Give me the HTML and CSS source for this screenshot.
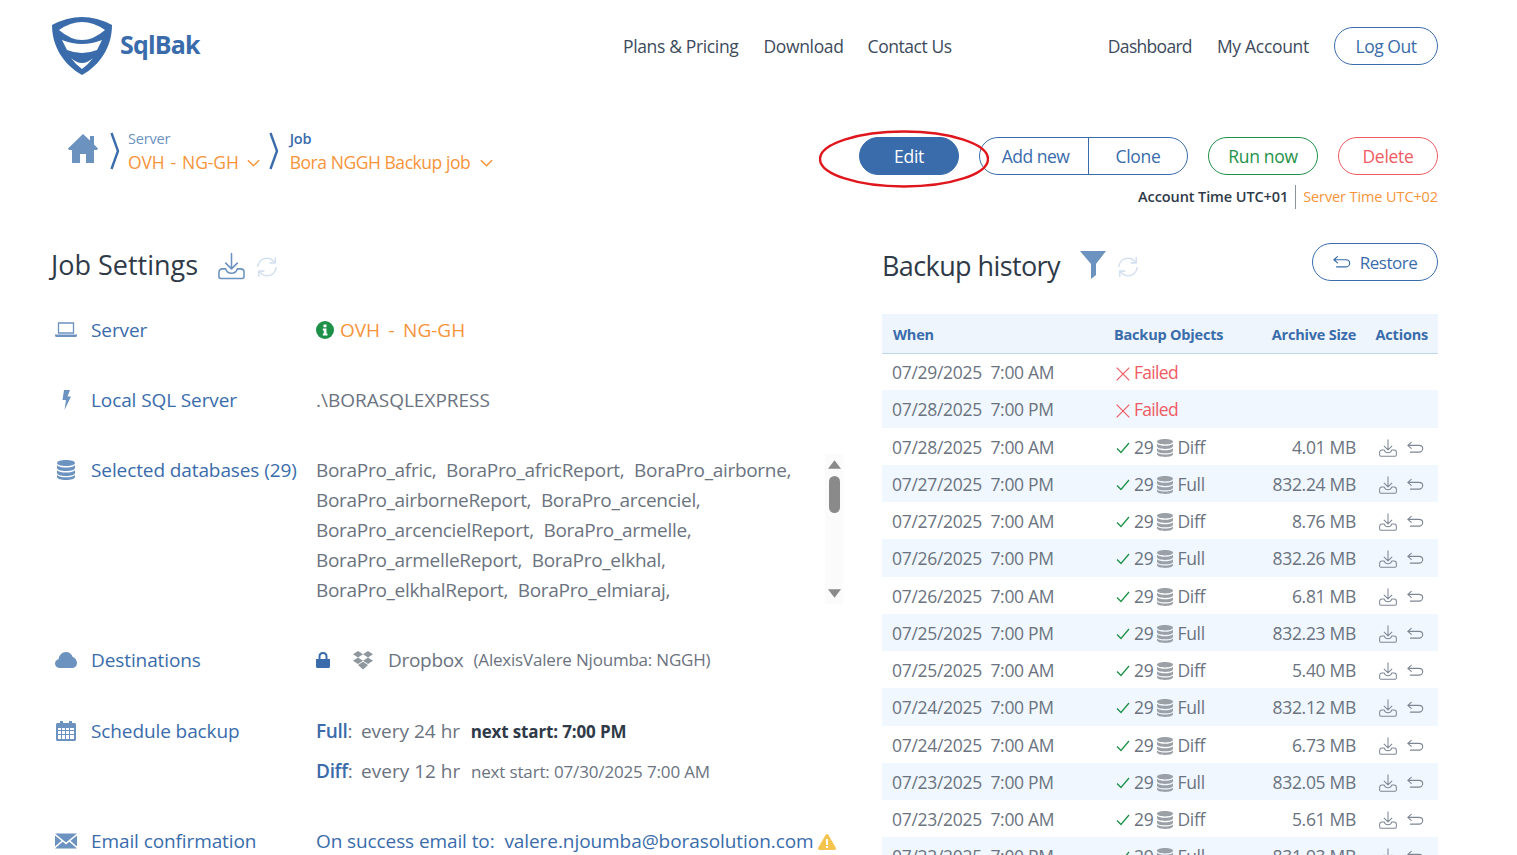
FILE: index.html
```html
<!DOCTYPE html>
<html lang="en">
<head>
<meta charset="utf-8">
<title>SqlBak</title>
<link rel="stylesheet" href="styles.css">
</head>
<body>
<svg class="defs" width="0" height="0" aria-hidden="true">
  <defs>
    <symbol id="i-db" viewBox="0 0 18 20"><path fill="currentColor" d="M9 0c5 0 9 1.300 9 3s-4 3-9 3-9-1.300-9-3 4-3 9-3zM0 5.200C1.500 6.800 5 7.500 9 7.500s7.500-.7 9-2.300V8c0 1.700-4 3-9 3S0 9.700 0 8zM0 10.200c1.500 1.600 5 2.300 9 2.300s7.500-.7 9-2.300V13c0 1.700-4 3-9 3s-9-1.300-9-3zM0 15c1.500 1.600 5 2.300 9 2.300s7.500-.7 9-2.300v2c0 1.700-4 3-9 3s-9-1.300-9-3z"/></symbol>
    <symbol id="i-dl" viewBox="0 0 28 28"><g fill="none" stroke="currentColor" stroke-width="1.600" stroke-linecap="round" stroke-linejoin="round"><path d="M14 1v16M8 11l6 6 6-6"/><path d="M8 17H4.500C2.500 17 1 18.500 1 20.500V25c0 1.200.8 2 2 2h22c1.200 0 2-.8 2-2v-4.500c0-2-1.500-3.500-3.500-3.500H20c-1 3-3 4.500-6 4.500S9 20 8 17z"/></g></symbol>
    <symbol id="i-undo" viewBox="0 0 20 14"><path fill="none" stroke="currentColor" stroke-width="1.300" stroke-linecap="round" stroke-linejoin="round" d="M5 1 1 4.500 5 8M1 4.500h13c2.500 0 4.500 1.500 4.500 3.800S16.500 12.500 14 12.500H4"/></symbol>
    <symbol id="i-refresh" viewBox="0 0 24 24"><g fill="none" stroke="currentColor" stroke-width="1.800" stroke-linecap="round" stroke-linejoin="round"><path d="M2 11C3 6 7 2.500 12 2.500c3.500 0 6 1.500 8 4.500M21 2v5.500h-5.500"/><path d="M22 13c-1 5-5 8.500-10 8.500-3.500 0-6-1.500-8-4.500M3 22v-5.500h5.500"/></g></symbol>
    <symbol id="i-check" viewBox="0 0 14 12"><path fill="none" stroke="currentColor" stroke-width="1.300" d="M1 6.500 5 10.500 13 1"/></symbol>
    <symbol id="i-x" viewBox="0 0 14 14"><path fill="none" stroke="currentColor" stroke-width="1.200" d="M.7.700l12.600 12.600M13.300.7.700 13.300"/></symbol>
  </defs>
</svg>

<div class="page">
  <header class="topbar">
    <a class="brand">
      <svg class="logo" viewBox="0 0 60 58">
        <path fill="#3a6cab" d="M0 8Q30-8 60 8C60 30 48 48 30 58 12 48 0 30 0 8z"/>
        <path fill="#fff" d="M7 13Q30-3 53 13 30 33 7 13z"/>
        <path fill="#fff" d="M10 23Q30 31 50 23L45 33Q30 39 15 33z"/>
        <path fill="#fff" d="M19 41Q30 51 41 41 36 48 30 52 24 48 19 41z"/>
      </svg>
      <span class="brand-name">SqlBak</span>
    </a>
    <nav class="nav-main">
      <a>Plans &amp; Pricing</a>
      <a>Download</a>
      <a class="nav-contact">Contact Us</a>
    </nav>
    <nav class="nav-user">
      <a class="nav-dashboard">Dashboard</a>
      <a class="nav-account">My Account</a>
      <a class="btn btn-blue btn-logout">Log Out</a>
    </nav>
  </header>

  <section class="toolbar">
    <div class="crumbs">
      <svg class="home" viewBox="0 0 30 29"><path fill="#6c92c0" d="M15 0 0 14.500l1 1.500h3v13h8v-9h6v9h8V16h3l1-1.500-4-4V2h-4v4.500z"/></svg>
      <svg class="crumb-sep" viewBox="0 0 10 38"><path fill="none" stroke="#3a6cab" stroke-width="2.400" d="M1.500 1 8 19 1.500 37"/></svg>
      <div class="crumb crumb-server">
        <span class="crumb-label">Server</span>
        <span class="crumb-value crumb-value-server">OVH - NG-GH <svg class="caret" viewBox="0 0 14 8"><path fill="none" stroke="currentColor" stroke-width="1.600" d="M1 1l6 6 6-6"/></svg></span>
      </div>
      <svg class="crumb-sep" viewBox="0 0 10 38"><path fill="none" stroke="#3a6cab" stroke-width="2.400" d="M1.500 1 8 19 1.500 37"/></svg>
      <div class="crumb">
        <span class="crumb-label crumb-label-strong">Job</span>
        <span class="crumb-value crumb-value-job">Bora NGGH Backup job <svg class="caret caret-job" viewBox="0 0 14 8"><path fill="none" stroke="currentColor" stroke-width="1.600" d="M1 1l6 6 6-6"/></svg></span>
      </div>
    </div>
    <div class="actions-wrap">
      <div class="actions">
        <a class="btn btn-solid">Edit</a>
        <div class="btn-group">
          <a class="btn-part btn-part-add">Add new</a>
          <a class="btn-part btn-part-clone">Clone</a>
        </div>
        <a class="btn btn-green">Run now</a>
        <a class="btn btn-red">Delete</a>
        <svg class="annotation" viewBox="0 0 170 58"><ellipse cx="85" cy="29" rx="84" ry="27.500" fill="none" stroke="#e0161d" stroke-width="2.400"/></svg>
      </div>
      <div class="times">
        <span class="time-account">Account Time UTC+01</span>
        <span class="time-server">Server Time UTC+02</span>
      </div>
    </div>
  </section>

  <main class="columns">
    <section class="settings">
      <div class="title-row">
        <h2 class="h-job">Job Settings</h2>
        <svg class="title-dl"><use href="#i-dl"/></svg>
        <svg class="title-refresh"><use href="#i-refresh"/></svg>
      </div>

      <div class="row row-server">
        <svg class="row-icon" viewBox="0 0 22 16"><path fill="none" stroke="currentColor" stroke-width="1.300" d="M3.500 1h15v10h-15z"/><path fill="currentColor" d="M0 12.500h22v1c0 .8-.6 1.500-1.500 1.500h-19C.6 15 0 14.300 0 13.500z"/></svg>
        <span class="row-label">Server</span>
        <div class="row-value value-server">
          <svg class="info" viewBox="0 0 18 18"><circle cx="9" cy="9" r="9" fill="#1e9148"/><path fill="#fff" d="M7.500 3.500h3v2.800h-3zM6.800 7.500h3.700v5h1v2H6.800v-2h1v-3h-1z"/></svg>
          <span>OVH - NG-GH</span>
        </div>
      </div>

      <div class="row row-sql">
        <svg class="row-icon" viewBox="0 0 22 20"><path fill="currentColor" d="M9 0h6l-2.500 6.500H16L9.500 20l1.500-10H7.500z"/></svg>
        <span class="row-label">Local SQL Server</span>
        <div class="row-value value-sql">.\BORASQLEXPRESS</div>
      </div>

      <div class="row row-db">
        <svg class="row-icon"><use href="#i-db"/></svg>
        <span class="row-label">Selected databases (29)</span>
        <div class="db-list">
          <div class="db-text">
            <span>BoraPro_afric,</span> <span>BoraPro_africReport,</span> <span>BoraPro_airborne,</span>
            <span>BoraPro_airborneReport,</span> <span>BoraPro_arcenciel,</span>
            <span>BoraPro_arcencielReport,</span> <span>BoraPro_armelle,</span>
            <span>BoraPro_armelleReport,</span> <span>BoraPro_elkhal,</span>
            <span>BoraPro_elkhalReport,</span> <span>BoraPro_elmiaraj,</span>
          </div>
          <div class="scrollbar">
            <svg class="sb-arrow" viewBox="0 0 12 8"><path fill="#8a8a8a" d="M6 0l6 8H0z"/></svg>
            <div class="sb-thumb"></div>
            <svg class="sb-arrow sb-arrow-end" viewBox="0 0 12 8"><path fill="#8a8a8a" d="M0 0h12L6 8z"/></svg>
          </div>
        </div>
      </div>

      <div class="row row-dest">
        <svg class="row-icon" viewBox="0 0 22 16"><path fill="currentColor" d="M5 16C2 16 0 14 0 11.500 0 9.300 1.500 7.700 3.500 7.300 4 3.500 7 0 11 0c3.300 0 5.800 2 6.700 5C20 5.800 22 8 22 11c0 3-2.500 5-5 5z"/></svg>
        <span class="row-label">Destinations</span>
        <div class="row-value value-dest">
          <svg class="lock" viewBox="0 0 14 16"><path fill="none" stroke="#3a6cab" stroke-width="2" d="M3.500 7V4.500C3.500 2.500 5 1 7 1s3.500 1.500 3.500 3.500V7"/><path fill="#3a6cab" d="M0 7h14v7.500c0 .8-.6 1.500-1.500 1.500h-11C.6 16 0 15.300 0 14.500z"/></svg>
          <svg class="dropbox" viewBox="0 0 20 19"><path fill="#8f979e" d="M5 0l5 3.200L5 6.500 0 3.200zM15 0l5 3.200-5 3.300-5-3.300zM0 9.800l5-3.300 5 3.300L5 13zM15 6.500l5 3.300-5 3.200-5-3.200zM5 14l5-3.200 5 3.200-5 4.500z"/></svg>
          <span>Dropbox</span>
          <span class="dest-account">(AlexisValere Njoumba: NGGH)</span>
        </div>
      </div>

      <div class="row row-schedule">
        <svg class="row-icon" viewBox="0 0 20 20"><path fill="currentColor" fill-rule="evenodd" d="M1.500 2H4V0h3v2h6V0h3v2h2.500C19.300 2 20 2.700 20 3.500v15c0 .8-.7 1.500-1.500 1.500h-17C.7 20 0 19.300 0 18.500v-15C0 2.700.7 2 1.500 2zM2 7v2h3V7zm4 0v2h3V7zm4 0v2h3V7zm4 0v2h4V7zM2 10v3h3v-3zm4 0v3h3v-3zm4 0v3h3v-3zm4 0v3h4v-3zM2 14v4h3v-4zm4 0v4h3v-4zm4 0v4h3v-4zm4 0v4h4v-4z"/></svg>
        <span class="row-label">Schedule backup</span>
        <div class="schedule">
          <div class="sched-line"><b class="sched-kind">Full</b>: <span class="sched-every">every 24 hr</span> <b class="sched-next-strong">next start: 7:00 PM</b></div>
          <div class="sched-line"><b class="sched-kind">Diff</b>: <span class="sched-every">every 12 hr</span> <span class="sched-next">next start: 07/30/2025 7:00 AM</span></div>
        </div>
      </div>

      <div class="row row-email">
        <svg class="row-icon" viewBox="0 0 22 15"><path fill="currentColor" d="M0 0h22L11 9zM0 2l6.500 5.300L0 13zM22 2l-6.500 5.300L22 13zM7.700 8.300 11 11l3.300-2.700L22 15H0z"/></svg>
        <span class="row-label">Email confirmation</span>
        <div class="row-value value-email">On success email to: <span class="email-addr">valere.njoumba@borasolution.com</span><svg class="warn" viewBox="0 0 18 16"><path fill="#f4c44e" d="M9 0c.6 0 1 .3 1.300.8l7.500 13c.5 1-.1 2.200-1.300 2.200h-15C.3 16-.3 14.800.2 13.800L7.700.8C8 .3 8.400 0 9 0z"/><path fill="#fff" d="M8 5h2v6H8zM8 12h2v2H8z"/></svg></div>
      </div>
    </section>

    <section class="history">
      <div class="title-row history-title">
        <h2 class="h-history">Backup history</h2>
        <svg class="filter" viewBox="0 0 26 28"><path fill="#6c92c0" d="M0 0h26L16 13v11l-5 4V13z"/></svg>
        <svg class="title-refresh"><use href="#i-refresh"/></svg>
        <a class="btn btn-blue btn-restore"><svg class="restore-icon"><use href="#i-undo"/></svg>Restore</a>
      </div>

      <table class="runs">
        <thead>
          <tr><th class="c-when">When</th><th class="c-obj">Backup Objects</th><th class="c-size">Archive Size</th><th class="c-act">Actions</th></tr>
        </thead>
        <tbody>
          <tr><td>07/29/2025&nbsp; 7:00 AM</td><td class="failed"><svg class="x"><use href="#i-x"/></svg>Failed</td><td></td><td></td></tr>
          <tr><td>07/28/2025&nbsp; 7:00 PM</td><td class="failed"><svg class="x"><use href="#i-x"/></svg>Failed</td><td></td><td></td></tr>
          <tr><td>07/28/2025&nbsp; 7:00 AM</td><td class="obj"><svg class="ok"><use href="#i-check"/></svg>29<svg class="db"><use href="#i-db"/></svg>Diff</td><td class="size">4.01 MB</td><td class="acts"><svg class="a-dl"><use href="#i-dl"/></svg><svg class="a-undo"><use href="#i-undo"/></svg></td></tr>
          <tr><td>07/27/2025&nbsp; 7:00 PM</td><td class="obj"><svg class="ok"><use href="#i-check"/></svg>29<svg class="db"><use href="#i-db"/></svg>Full</td><td class="size">832.24 MB</td><td class="acts"><svg class="a-dl"><use href="#i-dl"/></svg><svg class="a-undo"><use href="#i-undo"/></svg></td></tr>
          <tr><td>07/27/2025&nbsp; 7:00 AM</td><td class="obj"><svg class="ok"><use href="#i-check"/></svg>29<svg class="db"><use href="#i-db"/></svg>Diff</td><td class="size">8.76 MB</td><td class="acts"><svg class="a-dl"><use href="#i-dl"/></svg><svg class="a-undo"><use href="#i-undo"/></svg></td></tr>
          <tr><td>07/26/2025&nbsp; 7:00 PM</td><td class="obj"><svg class="ok"><use href="#i-check"/></svg>29<svg class="db"><use href="#i-db"/></svg>Full</td><td class="size">832.26 MB</td><td class="acts"><svg class="a-dl"><use href="#i-dl"/></svg><svg class="a-undo"><use href="#i-undo"/></svg></td></tr>
          <tr><td>07/26/2025&nbsp; 7:00 AM</td><td class="obj"><svg class="ok"><use href="#i-check"/></svg>29<svg class="db"><use href="#i-db"/></svg>Diff</td><td class="size">6.81 MB</td><td class="acts"><svg class="a-dl"><use href="#i-dl"/></svg><svg class="a-undo"><use href="#i-undo"/></svg></td></tr>
          <tr><td>07/25/2025&nbsp; 7:00 PM</td><td class="obj"><svg class="ok"><use href="#i-check"/></svg>29<svg class="db"><use href="#i-db"/></svg>Full</td><td class="size">832.23 MB</td><td class="acts"><svg class="a-dl"><use href="#i-dl"/></svg><svg class="a-undo"><use href="#i-undo"/></svg></td></tr>
          <tr><td>07/25/2025&nbsp; 7:00 AM</td><td class="obj"><svg class="ok"><use href="#i-check"/></svg>29<svg class="db"><use href="#i-db"/></svg>Diff</td><td class="size">5.40 MB</td><td class="acts"><svg class="a-dl"><use href="#i-dl"/></svg><svg class="a-undo"><use href="#i-undo"/></svg></td></tr>
          <tr><td>07/24/2025&nbsp; 7:00 PM</td><td class="obj"><svg class="ok"><use href="#i-check"/></svg>29<svg class="db"><use href="#i-db"/></svg>Full</td><td class="size">832.12 MB</td><td class="acts"><svg class="a-dl"><use href="#i-dl"/></svg><svg class="a-undo"><use href="#i-undo"/></svg></td></tr>
          <tr><td>07/24/2025&nbsp; 7:00 AM</td><td class="obj"><svg class="ok"><use href="#i-check"/></svg>29<svg class="db"><use href="#i-db"/></svg>Diff</td><td class="size">6.73 MB</td><td class="acts"><svg class="a-dl"><use href="#i-dl"/></svg><svg class="a-undo"><use href="#i-undo"/></svg></td></tr>
          <tr><td>07/23/2025&nbsp; 7:00 PM</td><td class="obj"><svg class="ok"><use href="#i-check"/></svg>29<svg class="db"><use href="#i-db"/></svg>Full</td><td class="size">832.05 MB</td><td class="acts"><svg class="a-dl"><use href="#i-dl"/></svg><svg class="a-undo"><use href="#i-undo"/></svg></td></tr>
          <tr><td>07/23/2025&nbsp; 7:00 AM</td><td class="obj"><svg class="ok"><use href="#i-check"/></svg>29<svg class="db"><use href="#i-db"/></svg>Diff</td><td class="size">5.61 MB</td><td class="acts"><svg class="a-dl"><use href="#i-dl"/></svg><svg class="a-undo"><use href="#i-undo"/></svg></td></tr>
          <tr><td>07/22/2025&nbsp; 7:00 PM</td><td class="obj"><svg class="ok"><use href="#i-check"/></svg>29<svg class="db"><use href="#i-db"/></svg>Full</td><td class="size">831.93 MB</td><td class="acts"><svg class="a-dl"><use href="#i-dl"/></svg><svg class="a-undo"><use href="#i-undo"/></svg></td></tr>
        </tbody>
      </table>
    </section>
  </main>
</div>
</body>
</html>
```

FILE: styles.css
```css
* { box-sizing: border-box; }
html, body { margin: 0; height: 100%; overflow: hidden; background: #fff; }
body { font-family: "Open Sans", "Noto Sans", "Liberation Sans", sans-serif; color: #6b7380; font-stretch: 90%; }
.defs { position: absolute; }
.page { width: 1517px; height: 855px; overflow: hidden; padding: 0 79px 0 51px; }
a { text-decoration: none; color: inherit; }

.topbar { display: flex; align-items: flex-start; height: 130px; padding-top: 17px; font-size: 17.500px; color: #3d4a5c; letter-spacing: -.35px; white-space: nowrap; }
.brand { display: flex; align-items: flex-start; width: 572px; }
.logo { width: 60px; height: 58px; margin-left: 1px; flex: none; }
.brand-name { font-size: 25px; font-weight: 700; color: #3a6cab; margin: 10px 0 0 8px; letter-spacing: -.8px; }
.nav-main { display: flex; gap: 25px; padding-top: 17px; width: 484px; }
.nav-contact { letter-spacing: -.45px; margin-left: -1px; }
.nav-user { display: flex; gap: 25px; align-items: flex-start; flex: 1; justify-content: flex-end; padding-top: 17px; }
.nav-dashboard { letter-spacing: -.7px; }
.nav-account { letter-spacing: -.3px; }
.btn-logout { margin-top: -7px; width: 104px; flex: none; letter-spacing: -.5px; }

.btn { display: flex; align-items: center; justify-content: center; height: 38px; border-radius: 19px; border: 1px solid; font-size: 17.500px; }
.btn-blue { border-color: #3a6cab; color: #3a6cab; }
.btn-solid { background: #3a6cab; border-color: #3a6cab; color: #fff; width: 100px; letter-spacing: -.3px; }
.btn-green { border-color: #1e9148; color: #1e9148; width: 110px; letter-spacing: -.3px; }
.btn-red { border-color: #ef5b63; color: #ef5b63; width: 100px; letter-spacing: -.3px; }

.toolbar { display: flex; justify-content: space-between; height: 115px; }
.crumbs { display: flex; align-items: flex-start; padding: 0 0 0 17px; }
.home { width: 30px; height: 29px; margin: 4px 12px 0 0; }
.crumb-sep { width: 10px; height: 38px; margin-top: 2px; flex: none; }
.crumb { display: flex; flex-direction: column; margin-left: 8px; }
.crumb-server { margin-right: 9px; }
.crumb + .crumb-sep + .crumb { margin-left: 11px; }
.crumb-label { font-size: 14.500px; line-height: 18px; color: #6c92c0; letter-spacing: -.2px; }
.crumb-label-strong { color: #3a6cab; font-weight: 600; }
.crumb-value { font-size: 17.500px; line-height: 28px; color: #f7943a; white-space: nowrap; }
.crumb-value-server { word-spacing: 1.500px; letter-spacing: -.1px; }
.crumb-value-job { letter-spacing: -.45px; }
.caret { width: 13px; height: 8px; margin-left: 2px; vertical-align: 2px; }
.caret-job { margin-left: 6px; }

.actions-wrap { display: flex; flex-direction: column; align-items: flex-end; padding-top: 7px; }
.actions { display: flex; gap: 20px; position: relative; }
.btn-group { display: flex; height: 38px; border: 1px solid #3a6cab; border-radius: 19px; color: #3a6cab; font-size: 17.500px; letter-spacing: -.3px; }
.btn-part { display: flex; align-items: center; justify-content: center; }
.btn-part-add { width: 108px; padding-left: 3px; letter-spacing: -.5px; }
.btn-part-clone { width: 99px; border-left: 1px solid #3a6cab; }
.annotation { position: absolute; left: -40px; top: -7px; width: 170px; height: 58px; pointer-events: none; }
.times { display: flex; margin-top: 10px; font-size: 14.500px; line-height: 24px; letter-spacing: -.1px; }
.time-account { color: #2f3a48; font-weight: 600; padding-right: 7px; border-right: 1px solid #8a929c; }
.time-server { color: #f7943a; padding-left: 7px; }

.columns { display: flex; justify-content: space-between; }
.settings { width: 794px; }
.history { width: 556px; }
.title-row { display: flex; align-items: center; height: 40px; margin-top: 0; }
h2 { margin: 0; font-size: 27px; font-weight: 400; color: #2f3a48; }
.h-job { letter-spacing: 0; padding-bottom: 2px; }
.h-history { letter-spacing: -.6px; }
.title-dl { width: 27px; height: 28px; margin: 2px 0 0 20px; color: #6c92c0; }
.title-refresh { width: 22px; height: 22px; margin: 4px 0 0 11px; color: #d5e1ef; }

.row { display: grid; grid-template-columns: 40px 225px 1fr; align-items: start; font-size: 19px; letter-spacing: -.3px; line-height: 30px; }
.row-icon { width: 22px; height: 20px; margin: 5px 0 0 4px; color: #6c92c0; }
.row-label { color: #3a6cab; letter-spacing: -.1px; }
.row-server { margin-top: 30px; height: 70px; }
.row-sql { height: 70px; }
.row-db { height: 190px; }
.row-dest { height: 71px; }
.row-schedule { height: 110px; }
.row-email { height: 40px; }
.value-server { display: flex; align-items: center; gap: 6px; color: #f7943a; word-spacing: 3.500px; letter-spacing: 0; }
.value-sql { letter-spacing: 0; }
.info { width: 18px; height: 18px; }
.db-list { display: flex; width: 527px; height: 150px; justify-content: space-between; }
.db-text { width: 490px; }
.db-text span { margin-right: 5px; }
.scrollbar { display: flex; flex-direction: column; align-items: center; width: 18px; height: 150px; margin-top: -1px; background: #fbfbfb; padding: 6px 0 6px; }
.sb-arrow { width: 13px; height: 9px; flex: none; }
.sb-arrow-end { margin-top: auto; }
.sb-thumb { width: 11px; height: 37px; margin-top: 7px; background: #8a8a8a; border-radius: 6px; }
.value-dest { display: flex; align-items: center; }
.lock { width: 14px; height: 16px; margin-right: 23px; }
.dropbox { width: 20px; height: 19px; margin-right: 15px; }
.dest-account { font-size: 17px; margin-left: 10px; letter-spacing: -.2px; }
.sched-line { height: 40px; }
.sched-kind { color: #3a6cab; font-weight: 600; }
.sched-every { margin: 0 6px 0 4px; letter-spacing: 0; }
.sched-next-strong { font-size: 17px; font-weight: 700; color: #2f3a48; letter-spacing: -.15px; }
.sched-next { font-size: 17px; letter-spacing: -.15px; }
.value-email { color: #3a6cab; white-space: nowrap; letter-spacing: -.1px; }
.email-addr { margin-left: 5px; letter-spacing: -.07px; }
.warn { width: 18px; height: 16px; margin-left: 4px; vertical-align: -2px; }

.history-title { position: relative; }
.filter { width: 26px; height: 28px; margin-left: 20px; }
.history-title .title-refresh { margin-left: 11px; }
.btn-restore { position: absolute; right: 0; top: -2px; width: 126px; gap: 9px; font-size: 17px; letter-spacing: -.5px; }
.restore-icon { width: 18px; height: 14px; }

.runs { border-collapse: collapse; width: 556px; margin-top: 29px; table-layout: fixed; font-size: 17.500px; letter-spacing: -.3px; }
.runs th { background: #eef5fc; border-bottom: 1px solid #bcd6ea; height: 39px; font-size: 14.500px; font-weight: 700; color: #3a6cab; text-align: left; padding: 2px 0 0; letter-spacing: -.2px; }
.runs th.c-when { width: 232px; padding-left: 11px; }
.runs th.c-obj { width: 140px; }
.runs th.c-size { width: 102px; text-align: right; }
.runs th.c-act { width: 82px; text-align: right; padding-right: 10px; }
.runs td { height: 37.250px; padding: 1px 0 0; white-space: nowrap; }
.runs td:first-child { padding-left: 10px; }
.runs tbody tr:nth-child(even) { background: #f0f7fe; }
.failed { color: #ef5b63; letter-spacing: -.7px; }
.x { width: 14px; height: 14px; margin: 0 4px 0 2px; vertical-align: -2px; color: #ef5b63; }
.ok { width: 14px; height: 12px; margin: 0 4px 0 2px; color: #1e9148; }
.db { width: 16px; height: 18px; margin: 0 4px; vertical-align: -3px; color: #9aa0a6; }
.size { text-align: right; }
.acts { text-align: right; padding-right: 14px !important; }
.a-dl { width: 18px; height: 18px; color: #7d8794; vertical-align: -3px; }
.a-undo { width: 17px; height: 13px; margin-left: 10px; color: #7d8794; vertical-align: 0; }
```
